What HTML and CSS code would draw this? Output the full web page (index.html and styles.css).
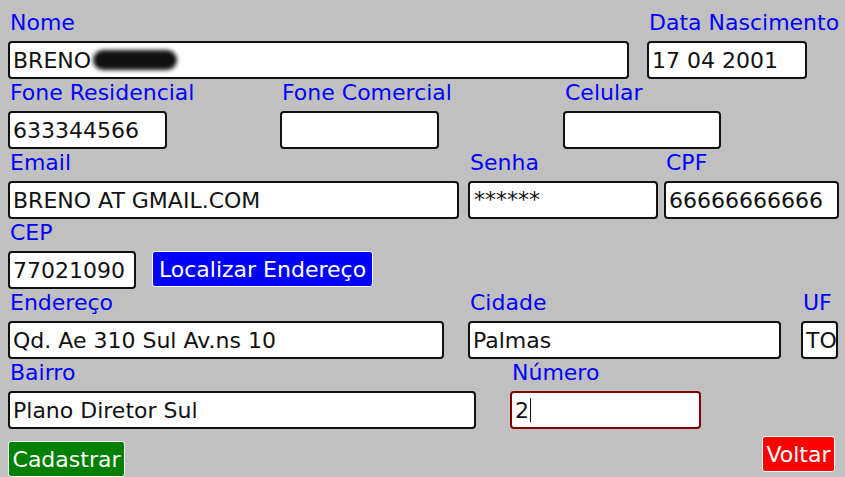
FILE: index.html
```html
<!DOCTYPE html>
<html lang="pt">
<head>
<meta charset="utf-8">
<title>Cadastro</title>
<link rel="stylesheet" href="styles.css">
</head>
<body>
<main class="form">
  <div class="row">
    <div class="field w-nome"><label class="lbl">Nome</label><div class="box">BRENO<span class="blur"></span></div></div>
    <div class="field w-data"><label class="lbl">Data Nascimento</label><div class="box">17 04 2001</div></div>
  </div>
  <div class="row">
    <div class="field w-fres"><label class="lbl">Fone Residencial</label><div class="box">633344566</div></div>
    <div class="field w-fcom"><label class="lbl">Fone Comercial</label><div class="box"></div></div>
    <div class="field w-cel"><label class="lbl">Celular</label><div class="box"></div></div>
  </div>
  <div class="row">
    <div class="field w-email"><label class="lbl">Email</label><div class="box">BRENO AT GMAIL.COM</div></div>
    <div class="field w-senha"><label class="lbl">Senha</label><div class="box pass">******</div></div>
    <div class="field w-cpf"><label class="lbl">CPF</label><div class="box">66666666666</div></div>
  </div>
  <div class="row">
    <div class="field w-cep"><label class="lbl">CEP</label><div class="box">77021090</div></div>
    <div class="field w-loc"><div class="lbl"></div><button class="btn btn-blue">Localizar Endereço</button></div>
  </div>
  <div class="row">
    <div class="field w-end"><label class="lbl">Endereço</label><div class="box">Qd. Ae 310 Sul Av.ns 10</div></div>
    <div class="field w-cid"><label class="lbl">Cidade</label><div class="box">Palmas</div></div>
    <div class="field w-uf"><label class="lbl">UF</label><div class="box">TO</div></div>
  </div>
  <div class="row">
    <div class="field w-bairro"><label class="lbl">Bairro</label><div class="box">Plano Diretor Sul</div></div>
    <div class="field w-num"><label class="lbl">Número</label><div class="box focus">2<span class="caret"></span></div></div>
  </div>
  <div class="actions">
    <button class="btn btn-green">Cadastrar</button>
    <button class="btn btn-red">Voltar</button>
  </div>
</main>
</body>
</html>
```

FILE: styles.css
```css
html, body {
  margin: 0;
  padding: 0;
  background: #c0c0c0;
  width: 845px;
  height: 477px;
  overflow: hidden;
}
body {
  font-family: "DejaVu Sans", sans-serif;
  font-size: 22px;
}
.form {
  padding: 10px 0 0 8px;
}
.row {
  display: flex;
  height: 70px;
}
.field {
  display: flex;
  flex-direction: column;
}
.lbl {
  display: block;
  height: 31px;
  line-height: 26px;
  padding-left: 2px;
  color: #0000ff;
  white-space: nowrap;
}
.box {
  box-sizing: border-box;
  height: 38px;
  border: 2px solid #111;
  border-radius: 4px;
  background: #fff;
  color: #111;
  padding-left: 3px;
  display: flex;
  align-items: center;
  white-space: nowrap;
  overflow: hidden;
}
.box.pass {
  align-items: flex-start;
  padding-top: 4px;
  padding-left: 4px;
}
.box.focus {
  border-color: #800000;
}
.caret {
  display: inline-block;
  width: 1px;
  height: 24px;
  background: #111;
  margin-left: 1px;
}
.blur {
  display: inline-block;
  width: 84px;
  height: 20px;
  margin-left: 2px;
  background: #111;
  border-radius: 10px;
  filter: blur(2px);
}
.w-nome { width: 621px; }
.w-data { width: 160px; margin-left: 18px; }
.w-fres { width: 159px; }
.w-fcom { width: 159px; margin-left: 113px; }
.w-cel { width: 158px; margin-left: 124px; }
.w-email { width: 451px; }
.w-senha { width: 190px; margin-left: 9px; }
.w-cpf { width: 175px; margin-left: 6px; }
.w-cep { width: 128px; }
.w-loc { width: 221px; margin-left: 16px; }
.w-end { width: 436px; }
.w-cid { width: 313px; margin-left: 24px; }
.w-uf { width: 37px; margin-left: 20px; }
.w-bairro { width: 468px; }
.w-num { width: 191px; margin-left: 34px; }

.btn {
  box-sizing: border-box;
  height: 36px;
  border: 1px solid #fff;
  border-radius: 3px;
  color: #fff;
  font-family: "DejaVu Sans", sans-serif;
  font-size: 22px;
  padding: 0 2px;
  white-space: nowrap;
  cursor: pointer;
}
.btn-blue { background: #0000ff; width: 221px; height: 36px; }
.actions {
  display: flex;
  align-items: flex-start;
}
.btn-green {
  background: #008000;
  width: 117px;
  margin-top: 11px;
}
.btn-red {
  background: #ff0000;
  width: 73px;
  margin-top: 6px;
  margin-left: auto;
  margin-right: 10px;
}
```
